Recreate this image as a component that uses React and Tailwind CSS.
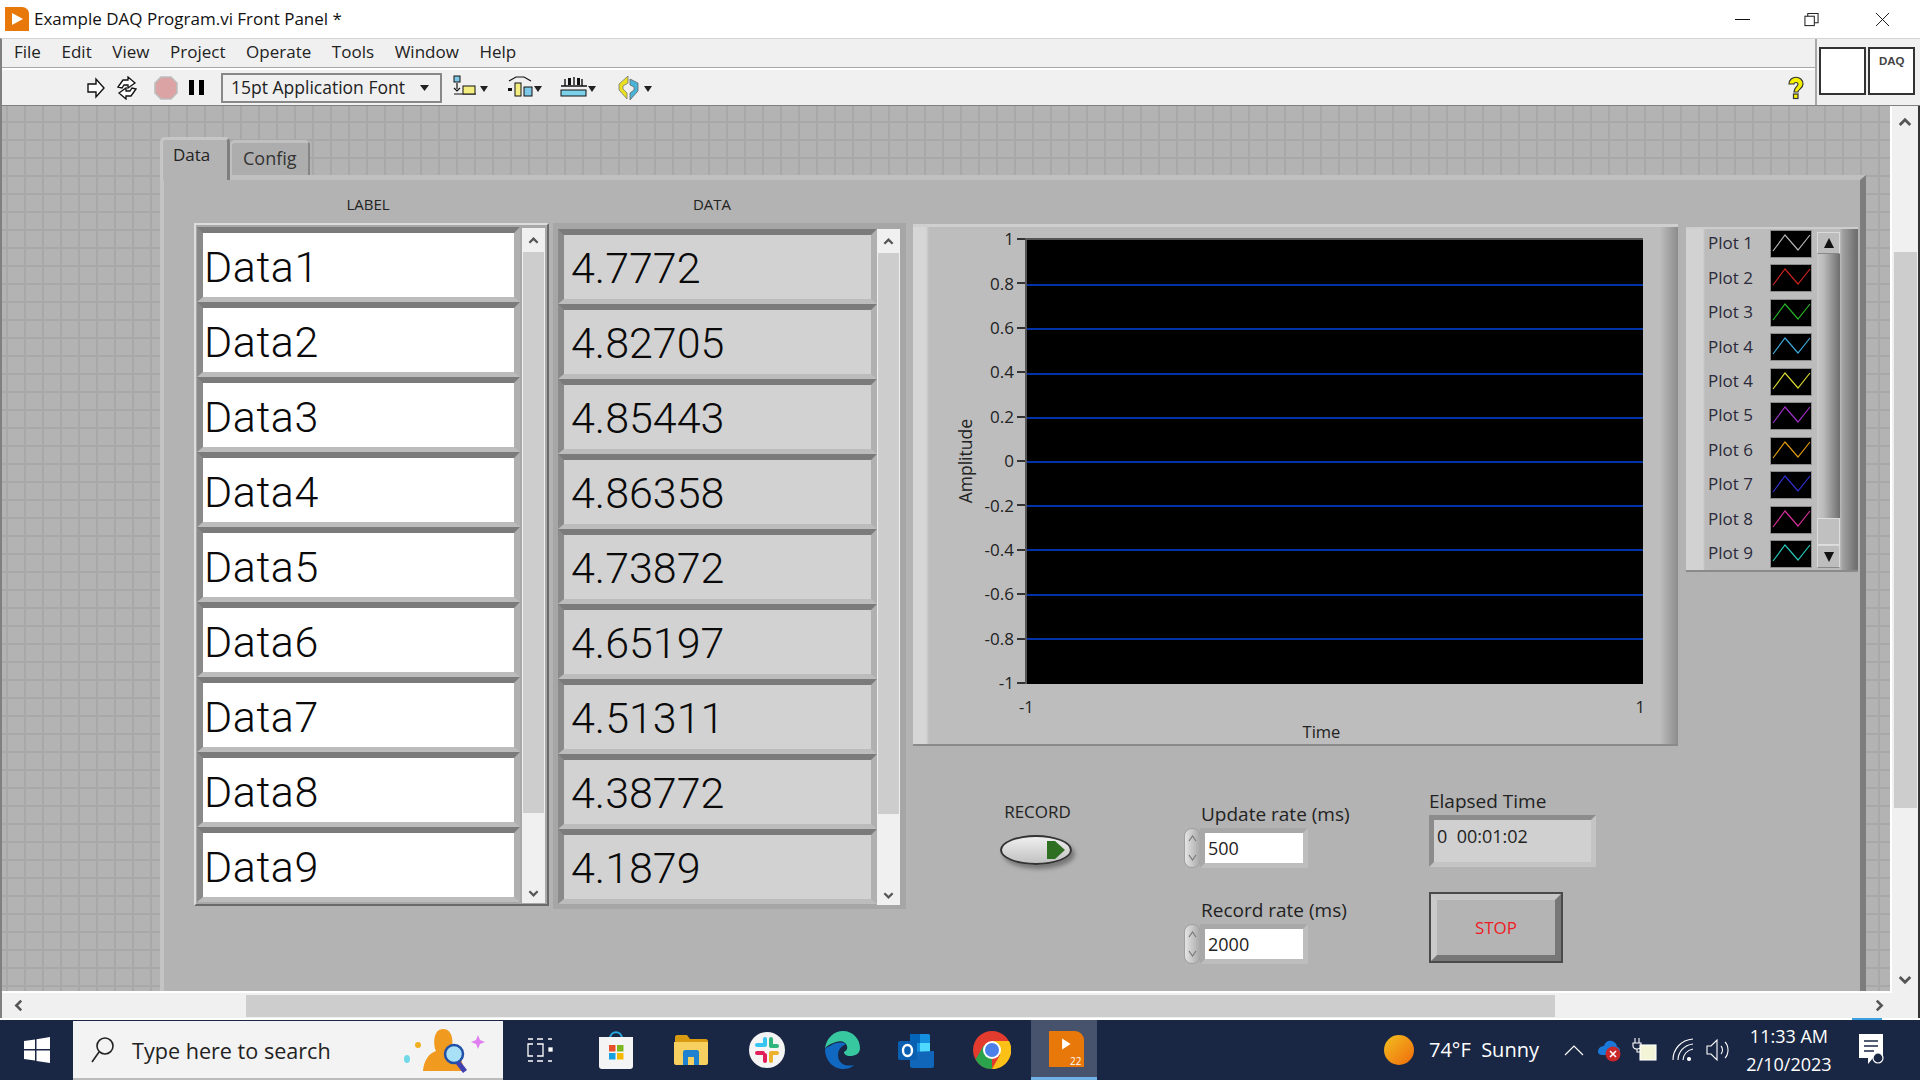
import React from "react";

const labels = ["Data1","Data2","Data3","Data4","Data5","Data6","Data7","Data8","Data9"];
const values = ["4.7772","4.82705","4.85443","4.86358","4.73872","4.65197","4.51311","4.38772","4.1879"];
const plots = [
  ["Plot 1","#b4b4b4"],["Plot 2","#c8241e"],["Plot 3","#28b428"],["Plot 4","#3fa9d8"],["Plot 4","#d8d832"],
  ["Plot 5","#a030c8"],["Plot 6","#e09a10"],["Plot 7","#3030d0"],["Plot 8","#d8309a"],["Plot 9","#28c8b8"],
];
const yTicks = ["1","0.8","0.6","0.4","0.2","0","-0.2","-0.4","-0.6","-0.8","-1"];

function Chevron({ dir = "up", size = 12, color = "#555" }) {
  const rot = { up: 0, down: 180, left: 270, right: 90 }[dir];
  return (
    <svg width={size} height={size} viewBox="0 0 12 12" style={{ transform: `rotate(${rot}deg)` }}>
      <path d="M1.5 8.5 6 4l4.5 4.5" fill="none" stroke={color} strokeWidth="2.4" />
    </svg>
  );
}

function Caret() {
  return (
    <svg width="9" height="6" viewBox="0 0 9 6" className="shrink-0"><path d="M0 0h9L4.500 6z" fill="#222" /></svg>
  );
}

function ListScroll({ thumbEnd }) {
  return (
    <div className="w-[23px] flex flex-col bg-[#f0f0f0]">
      <div className="h-[24px] flex items-center justify-center"><Chevron dir="up" size={11} /></div>
      <div className={`${thumbEnd} bg-[#cdcdcd] mx-[1px]`} />
      <div className="flex-1 flex items-end justify-center pb-[4px]"><Chevron dir="down" size={11} /></div>
    </div>
  );
}

function BigCell({ text, bg, inner }) {
  return (
    <div className="h-[75px] border-t-[6px] border-b-[5px] border-l-[6px] border-r-[6px] border-t-[#7b7b7b] border-b-[#bcbcbc] border-l-[#8a8a8a] border-r-[#b0b0b0]">
      <div className={`h-[64px] ${bg} ${inner} flex items-center text-[43px] leading-none text-[#0a0a0a] font-['Roboto',sans-serif] font-light`}>
        {text}
      </div>
    </div>
  );
}

function LabelCluster() {
  return (
    <div className="h-[683px] border-2 border-t-[#dcdcdc] border-l-[#dcdcdc] border-r-[#6a6a6a] border-b-[#6a6a6a] flex pt-[2px] pl-[1px] pr-[2px] bg-[#a8a8a8]">
      <div className="w-[324px]">
        {labels.map((l) => <BigCell key={l} text={l} bg="bg-white" inner="pl-[1px] pt-[4px] tracking-[0.6px]" />)}
      </div>
      <div className="ml-[2px] h-[675px] mt-[1px] flex"><ListScroll thumbEnd="h-[561px]" /></div>
    </div>
  );
}

function DataCluster() {
  return (
    <div className="h-[686px] flex pt-[6px] pl-[5px] pr-[5px] bg-[#a6a6a6]">
      <div className="w-[319px]">
        {values.map((l) => <BigCell key={l} text={l} bg="bg-[#d2d2d2]" inner="pl-[7px] pt-[2px]" />)}
      </div>
      <div className="h-[676px] flex"><ListScroll thumbEnd="h-[561px]" /></div>
    </div>
  );
}

function Chart() {
  return (
    <div className="w-[765px] h-[522px] ml-[2px] pt-[11px] bg-[linear-gradient(90deg,#d6d6d6_0,#d6d6d6_13px,#bdbdbd_16px,#bdbdbd_747px,#8c8c8c_765px)] border-b-2 border-b-[#8a8a8a] border-t-[3px] border-t-[#cfcfcf] text-[#222]">
      <div className="flex">
        <div className="ml-[43px] w-[20px] h-[446px] flex items-center justify-center">
          <span className="[writing-mode:vertical-rl] rotate-180 text-[17.5px] leading-none">Amplitude</span>
        </div>
        <div className="w-[49px] h-[446px] flex flex-col justify-between py-[1px] shrink-0">
          {yTicks.map((t) => (
            <div key={t} className="h-0 flex items-center justify-end gap-[3px] text-[17px]">
              <span>{t}</span>
              <div className="w-[8px] h-[2px] bg-[#333]" />
            </div>
          ))}
        </div>
        <div className="w-[618px] h-[446px] bg-black border-l-2 border-t-2 border-[#555] flex flex-col justify-between">
          {yTicks.map((t, i) => (
            <div key={t} className={`h-[2px] ${i === 0 || i === 10 ? "bg-transparent" : "bg-[#0033a8]"}`} />
          ))}
        </div>
      </div>
      <div className="flex justify-between ml-[106px] w-[626px] pt-[13px] text-[16.5px] leading-[20px]">
        <span>-1</span><span>1</span>
      </div>
      <div className="text-center ml-[48px] w-[721px] text-[16.5px] leading-[20px] mt-[5px]">Time</div>
    </div>
  );
}

function Swatch({ color }) {
  return (
    <svg width="42" height="28" viewBox="0 0 42 28" className="shrink-0">
      <rect width="42" height="28" fill="#000" stroke="#8c8c8c" strokeWidth="2" />
      <polyline points="3,21 15,5 28,20 40,5" fill="none" stroke={color} strokeWidth="1.2" />
    </svg>
  );
}

function Legend() {
  return (
    <div className="w-[172px] h-[345px] mt-[3px] ml-[8px] flex bg-[linear-gradient(90deg,#d2d2d2_0,#d2d2d2_17px,#bcbcbc_19px,#bcbcbc_154px,#a4a4a4_156px,#707070_170px)] border-b-2 border-b-[#8a8a8a] border-t-2 border-t-[#cdcdcd] pt-[1px]">
      <div className="ml-[22px] w-[104px] flex flex-col justify-between pb-[2px]">
        {plots.map(([n, c], i) => (
          <div key={i} className="h-[28px] flex items-center justify-between text-[17px] text-[#2a2a3a]">
            <span className="pb-[2px]">{n}</span>
            <Swatch color={c} />
          </div>
        ))}
      </div>
      <div className="ml-[5px] w-[23px] flex flex-col pt-[2px] pb-[2px]">
        <div className="h-[22px] bg-[#bdbdbd] border border-[#dadada] border-b-[#888] flex items-center justify-center">
          <svg width="12" height="10" viewBox="0 0 12 10"><path d="M6 0l5 10H1z" fill="#111" /></svg>
        </div>
        <div className="flex-1 bg-[linear-gradient(90deg,#c9c9c9,#bababa_30%,#6e6e6e)]" />
        <div className="h-[27px] bg-[#c0c0c0] border border-[#dddddd]" />
        <div className="h-[23px] bg-[#bdbdbd] border border-[#dadada] border-b-[#888] flex items-center justify-center">
          <svg width="12" height="10" viewBox="0 0 12 10"><path d="M6 10L1 0h10z" fill="#111" /></svg>
        </div>
      </div>
    </div>
  );
}

function Spinner() {
  return (
    <div className="w-[17px] h-[40px] rounded-[8px] bg-[linear-gradient(90deg,#e4e4e4,#a8a8a8)] border border-[#a0a0a0] flex flex-col items-center justify-around shrink-0 -mr-[1px]">
      <svg width="9" height="7" viewBox="0 0 9 7"><path d="M1 6 4.500 1 8 6" fill="none" stroke="#777" strokeWidth="1.2" /></svg>
      <svg width="9" height="7" viewBox="0 0 9 7"><path d="M1 1 4.500 6 8 1" fill="none" stroke="#777" strokeWidth="1.2" /></svg>
    </div>
  );
}

function NumBox({ label, value, className }) {
  return (
    <div className={className}>
      <div className="ml-[17px] mb-[2px] text-[19px] leading-[24px] text-[#222] whitespace-nowrap">{label}</div>
      <div className="flex">
        <Spinner />
        <div className="w-[108px] h-[40px] border-[5px] border-[#bdbdbd] border-t-[#a8a8a8] border-l-[#a8a8a8]">
          <div className="h-full bg-white pl-[3px] text-[18px] leading-[30px] text-[#222]">{value}</div>
        </div>
      </div>
    </div>
  );
}

function Controls() {
  return (
    <div className="flex">
      <div className="ml-[89px] mt-[56px] w-[72px] flex flex-col items-center">
        <div className="pl-[3px] text-[17px] leading-[20px] text-[#222] whitespace-nowrap">RECORD</div>
        <div className="mt-[13px] w-[72px] h-[30px] rounded-[50%] border-2 border-[#333] bg-[linear-gradient(180deg,#efefef,#c2c2c2)] shadow-[3px_4px_4px_#777] flex items-center justify-end pr-[3px]">
          <svg width="26" height="20" viewBox="0 0 26 20"><path d="M6 1h8l10 9-10 9H6z" fill="#2f6f22" /></svg>
        </div>
      </div>
      <div className="ml-[112px] w-[124px] flex flex-col">
        <NumBox className="mt-[56px]" label="Update rate (ms)" value="500" />
        <NumBox className="mt-[30px]" label="Record rate (ms)" value="2000" />
      </div>
      <div className="ml-[121px] flex flex-col mt-[43px]">
        <div className="text-[19px] leading-[24px] text-[#222] whitespace-nowrap">Elapsed Time</div>
        <div className="mt-[2px] w-[167px] h-[52px] border-[5px] border-t-[#8c8c8c] border-l-[#8c8c8c] border-r-[#c4c4c4] border-b-[#c4c4c4]">
          <div className="h-full bg-[#d0d0d0] pl-[3px] pt-[2px] text-[18px] leading-[28px] text-[#222] whitespace-pre">0  00:01:02</div>
        </div>
        <div className="mt-[25px] w-[134px] h-[71px] border-2 border-[#4a4a4a]">
          <div className="h-full border-[6px] border-t-[#c6c6c6] border-l-[#cacaca] border-r-[#777] border-b-[#777] bg-[#b4b4b4] flex items-center justify-center pt-[1px] text-[17px] text-[#ee1c25]">
            STOP
          </div>
        </div>
      </div>
    </div>
  );
}

function TabPanel() {
  return (
    <div className="ml-[158px] mt-[31px]">
      <div className="flex items-end h-[38px] relative z-10">
        <div className="w-[70px] h-[43px] -mb-[5px] rounded-t-[5px] bg-[#b3b3b3] border-t-[3px] border-l-[3px] border-r-[3px] border-t-[#c6c6c6] border-l-[#c6c6c6] border-r-[#7f7f7f] pl-[10px] pt-[3px] text-[17px] leading-[24px] text-[#222]">Data</div>
        <div className="w-[80px] h-[35px] rounded-t-[5px] bg-[#adadad] border-t-[3px] border-l-[2px] border-r-[2px] border-t-[#c0c0c0] border-l-[#c0c0c0] border-r-[#858585] pl-[11px] pt-[3px] text-[18px] leading-[24px] text-[#333]">Config</div>
      </div>
      <div className="w-[1706px] h-[817px] bg-[#b3b3b3] border-t-[5px] border-t-[#c0c0c0] border-l-[4px] border-l-[#c4c4c4] border-r-[6px] border-r-[#7d7d7d] flex pl-[30px]">
        <div className="w-[355px]">
          <div className="h-[43px] pt-[12px] text-center text-[15px] leading-[24px] text-[#222] pr-[7px]">LABEL</div>
          <LabelCluster />
        </div>
        <div className="w-[353px] ml-[4px]">
          <div className="h-[43px] pt-[12px] text-center text-[15px] leading-[24px] text-[#222] pr-[35px]">DATA</div>
          <DataCluster />
        </div>
        <div className="w-[767px] ml-[5px] pt-[44px] flex flex-col">
          <Chart />
          <Controls />
        </div>
        <div className="pt-[44px]"><Legend /></div>
      </div>
    </div>
  );
}

function ToolIcons() {
  return (
    <div className="flex items-center h-full">
      <svg className="ml-[84px]" width="20" height="22" viewBox="0 0 20 22"><path d="M2 7h8V2l8 9-8 9v-5H2z" fill="#fff" stroke="#111" strokeWidth="1.4" /></svg>
      <svg className="ml-[8px]" width="26" height="24" viewBox="0 0 26 24" fill="#fff" stroke="#111" strokeWidth="1.3">
        <path d="M4 11 9 4h5V1l7 6-7 5V9H10l-2 3z" />
        <path d="M22 13l-5 7h-5v3l-7-6 7-5v3h4l2-3z" />
      </svg>
      <svg className="ml-[14px]" width="24" height="24" viewBox="0 0 24 24"><path d="M7 1h10l6 6v10l-6 6H7l-6-6V7z" fill="#dba3a3" stroke="#bdbdbd" strokeWidth="1.6" /></svg>
      <div className="ml-[11px] flex gap-[5px]"><div className="w-[5px] h-[15px] bg-black" /><div className="w-[5px] h-[15px] bg-black" /></div>
      <div className="ml-[17px] w-[221px] h-[30px] border-2 border-[#888] flex items-center justify-between pl-[8px] pr-[11px] text-[17.5px] text-[#222]">
        <span className="whitespace-nowrap">15pt Application Font</span><Caret />
      </div>
      <svg className="ml-[11px]" width="36" height="28" viewBox="0 0 36 28">
        <rect x="1" y="2" width="6" height="6" fill="#7cc8e8" stroke="#111" />
        <path d="M4 9v6M1 14l3 3 3-3M1 20h22" stroke="#111" strokeWidth="1.2" fill="none" />
        <rect x="10" y="12" width="12" height="8" fill="#f4ee80" stroke="#111" />
        <path d="M27 12h8l-4 6z" fill="#222" />
      </svg>
      <svg className="ml-[17px]" width="37" height="28" viewBox="0 0 37 28">
        <path d="M3 7 10 3h8l7 4" fill="none" stroke="#111" strokeWidth="1.2" />
        <rect x="9" y="9" width="6" height="13" fill="#f4ee80" stroke="#111" />
        <rect x="18" y="13" width="8" height="9" fill="#7cc8e8" stroke="#111" />
        <rect x="2" y="14" width="4" height="3" fill="#111" />
        <path d="M28 12h8l-4 6z" fill="#222" />
      </svg>
      <svg className="ml-[17px]" width="37" height="28" viewBox="0 0 37 28">
        <path d="M1 12h26M14 3v8M5 5v7M22 5v7" stroke="#111" strokeWidth="1.4" />
        <rect x="8" y="4" width="3" height="7" fill="#111" />
        <rect x="17" y="4" width="3" height="7" fill="#111" />
        <rect x="1" y="16" width="25" height="6" fill="#7cd0e8" stroke="#111" />
        <path d="M28 12h8l-4 6z" fill="#222" />
      </svg>
      <svg className="ml-[19px]" width="37" height="28" viewBox="0 0 37 28">
        <path d="M12 2 3 10v6l8 9v-6l-4-4v-3l5-3z" fill="#e8e020" stroke="#777" strokeWidth="0.8" />
        <path d="M14 5l8 4v8l-8 9v-7l4-3v-3l-4-2z" fill="#48b4d8" stroke="#666" strokeWidth="0.8" />
        <path d="M28 12h8l-4 6z" fill="#222" />
      </svg>
    </div>
  );
}

function TitleBar() {
  return (
    <div className="h-[38px] shrink-0 bg-white flex items-center">
      <svg className="ml-[5px]" width="24" height="24" viewBox="0 0 24 24">
        <path d="M0 0h17c4 0 7 3 7 7v17H0z" fill="#e8780a" />
        <path d="M7 6l11 6-11 6z" fill="#fff" />
      </svg>
      <span className="ml-[5px] text-[17px] text-[#111] whitespace-nowrap">Example DAQ Program.vi Front Panel *</span>
      <div className="ml-auto flex items-center h-full">
        <div className="w-[15px] h-[1px] bg-[#111] mr-[54px]" />
        <svg width="15" height="15" viewBox="0 0 16 15" className="mr-[56px]" fill="none" stroke="#222" strokeWidth="1.1">
          <rect x="1" y="4" width="10" height="10" fill="#fff" />
          <path d="M4 4V1h11v10h-4" />
        </svg>
        <svg width="15" height="15" viewBox="0 0 16 16" className="mr-[30px]" stroke="#111" strokeWidth="1"><path d="M1 1l14 14M15 1 1 15" /></svg>
      </div>
    </div>
  );
}

function MenuArea() {
  const items = ["File","Edit","View","Project","Operate","Tools","Window","Help"];
  return (
    <div className="h-[68px] shrink-0 flex border-l-2 border-l-[#808080] border-b border-b-[#808080] border-t border-t-[#d4d4d4]">
      <div className="flex-1 flex flex-col">
        <div className="h-[29px] bg-[#f0f0f0] border-b border-b-[#a8a8a8] flex items-center text-[17px] text-[#222] pb-[2px]">
          <div className="flex gap-[20.6px] pl-[12px]">
            {items.map((t) => <span key={t}>{t}</span>)}
          </div>
        </div>
        <div className="flex-1 bg-[#f0f0f0] border-t-2 border-t-white flex items-center">
          <ToolIcons />
          <svg className="ml-auto mr-[10px]" width="18" height="24" viewBox="0 0 18 24">
            <path d="M2 8c0-9 14-9 14 0 0 5-5 5-5 8H7c0-5 4-5 4-8 0-2-4-2-4 0z" fill="#f4f000" stroke="#333" strokeWidth="1.2" />
            <rect x="6.500" y="18" width="4.500" height="4.500" fill="#f4f000" stroke="#333" strokeWidth="1.2" />
          </svg>
        </div>
      </div>
      <div className="w-[105px] bg-[#f0f0f0] border-l-2 border-l-[#a8a8a8] flex gap-[2px] pl-[2px] pt-[8px]">
        <div className="w-[47px] h-[48px] bg-white border-2 border-[#333]" />
        <div className="w-[47px] h-[48px] bg-white border-2 border-[#333] text-[11.5px] leading-none font-bold text-[#444] pl-[9px] pt-[7px] font-['Liberation_Sans',sans-serif]">DAQ</div>
      </div>
    </div>
  );
}

function Canvas() {
  return (
    <div className="h-[887px] overflow-hidden border-b-2 border-b-white border-r-2 border-r-white bg-[#b3b3b3] bg-[linear-gradient(#a8a8a8_2px,transparent_2px),linear-gradient(90deg,#a8a8a8_2px,transparent_2px)] bg-[size:18px_18px] bg-[position:4px_15px]">
      <TabPanel />
    </div>
  );
}

function Main() {
  return (
    <div className="h-[912px] shrink-0 flex border-l-2 border-l-[#808080] border-r-2 border-r-[#333] bg-[#f0f0f0]">
      <div className="flex-1 flex flex-col">
        <Canvas />
        <div className="flex-1 flex items-center pl-[10px]">
          <Chevron dir="left" size={13} />
          <div className="ml-[221px] w-[1309px] h-[22px] bg-[#cdcdcd]" />
          <div className="ml-auto mr-[6px]"><Chevron dir="right" size={13} /></div>
        </div>
      </div>
      <div className="w-[26px] flex flex-col items-center">
        <div className="h-[146px] w-full pt-[9px] flex justify-center"><Chevron dir="up" size={14} /></div>
        <div className="h-[556px] w-[23px] bg-[#cdcdcd]" />
        <div className="flex-1 flex items-end pb-[31px]"><Chevron dir="down" size={14} /></div>
      </div>
    </div>
  );
}

function Taskbar() {
  return (
    <div className="h-[60px] shrink-0 bg-[#1a2744] flex items-stretch text-white">
      <div className="w-[73px] flex items-center justify-center">
        <svg width="26" height="26" viewBox="0 0 26 26" fill="#fff"><path d="M0 4l11-1.500V12H0zM12.500 2.300 26 0v12H12.500zM0 13.500h11v10L0 22zM12.500 13.500H26V26l-13.500-2z" /></svg>
      </div>
      <div className="w-[430px] bg-[#f3f3f3] mt-[1px] border-b-2 border-b-[#bbb] flex items-center text-[#222]">
        <svg className="ml-[17px]" width="26" height="28" viewBox="0 0 26 28" fill="none" stroke="#222" strokeWidth="1.6">
          <circle cx="15" cy="10" r="8" />
          <path d="M9 16 2 26" />
        </svg>
        <span className="ml-[16px] pt-[3px] text-[21.6px] whitespace-nowrap">Type here to search</span>
        <svg className="ml-[auto] mr-[16px]" width="84" height="46" viewBox="0 0 84 46">
          <circle cx="15" cy="18" r="3" fill="#f0b020" />
          <ellipse cx="4" cy="32" rx="3" ry="4" fill="#70d8e8" />
          <path d="M75 8l2 5 5 2-5 2-2 5-2-5-5-2 5-2z" fill="#e080f0" />
          <path d="M20 44c1-12 7-18 13-20-3-6-3-22 7-22s11 14 8 22c8 2 12 10 13 20z" fill="#f09a20" />
          <circle cx="51" cy="27" r="9" fill="#a8e0f8" stroke="#2050a8" strokeWidth="2.5" />
          <path d="M57 34l7 9-4 3-7-9z" fill="#4040b0" />
        </svg>
      </div>
      <div className="w-[528px] flex items-center">
        <svg className="ml-[24px]" width="26" height="28" viewBox="0 0 26 28" fill="none" stroke="#fff" strokeWidth="1.3">
          <path d="M1 3h5M1 25h5M10 3h6M10 25h6M6 8H1v12h5M10 8h6v12h-6" />
          <path d="M21 3h4M21 25h4" />
          <rect x="22" y="12" width="3" height="3" fill="#fff" />
        </svg>
        <svg className="ml-[46px]" width="34" height="38" viewBox="0 0 34 38">
          <path d="M11 8c0-9 12-9 12 0" fill="none" stroke="#29a8e0" strokeWidth="2" />
          <path d="M0 6h34v29c0 2-1 3-3 3H3c-2 0-3-1-3-3z" fill="#f4f4f4" />
          <rect x="10" y="14" width="6.500" height="6.500" fill="#e8502a" />
          <rect x="18" y="14" width="6.500" height="6.500" fill="#7cb820" />
          <rect x="10" y="22" width="6.500" height="6.500" fill="#18a0e0" />
          <rect x="18" y="22" width="6.500" height="6.500" fill="#f8b800" />
        </svg>
        <svg className="ml-[41px]" width="34" height="30" viewBox="0 0 34 30">
          <path d="M1 2c0-1 1-2 2-2h10l3 4h16c1 0 2 1 2 2v4H1z" fill="#d89a10" />
          <path d="M0 7h34v21c0 1-1 2-2 2H2c-1 0-2-1-2-2z" fill="#f8d060" />
          <path d="M9 30V17c0-1 1-2 2-2h12c1 0 2 1 2 2v13h-5v-8h-6v8z" fill="#1e82d0" />
        </svg>
        <svg className="ml-[41px]" width="36" height="36" viewBox="0 0 36 36">
          <circle cx="18" cy="18" r="18" fill="#f4f4f4" />
          <rect x="14" y="5" width="4" height="10" rx="2" fill="#36c5f0" />
          <rect x="6" y="11" width="10" height="4" rx="2" fill="#36c5f0" />
          <rect x="20" y="5" width="4" height="10" rx="2" fill="#2eb67d" />
          <rect x="20" y="12" width="10" height="4" rx="2" fill="#2eb67d" />
          <rect x="20" y="21" width="4" height="10" rx="2" fill="#ecb22e" />
          <rect x="20" y="19" width="10" height="4" rx="2" fill="#ecb22e" />
          <rect x="14" y="21" width="4" height="10" rx="2" fill="#e01e5a" />
          <rect x="6" y="19" width="10" height="4" rx="2" fill="#e01e5a" />
        </svg>
        <svg className="ml-[39px]" width="36" height="38" viewBox="0 0 36 38">
          <path d="M1 18C2 7 10 0 19 0c10 0 17 8 17 17 0 6-5 8-10 8-4 0-6-2-6-4 2-1 4-3 3-6-1-4-6-6-11-4C6 13 2 15 1 18z" fill="#38c8a0" />
          <path d="M1 18c0 11 8 20 18 20 4 0 8-1 11-4-8 2-16-1-16-10 0-6 4-9 8-11-5-3-12-1-16 2-3 1-4 2-5 3z" fill="#1068c0" />
        </svg>
        <svg className="ml-[38px]" width="36" height="36" viewBox="0 0 36 36">
          <path d="M12 2h18c1 0 2 1 2 2v28H12z" fill="#28a8ea" />
          <path d="M12 2h10v9H12z" fill="#0364b8" />
          <path d="M22 2h8c1 0 2 1 2 2v7H22zM12 11h10v9H12z" fill="#1490df" />
          <path d="M22 11h10v9H22z" fill="#50d9ff" />
          <path d="M12 20l24-1v15c0 1-1 2-2 2H14c-1 0-2-1-2-2z" fill="#1066b8" />
          <rect x="0" y="9" width="19" height="19" rx="2" fill="#0a5fb0" />
          <ellipse cx="9.500" cy="18.500" rx="4.500" ry="5.500" fill="none" stroke="#fff" strokeWidth="2.400" />
        </svg>
        <svg className="ml-[39px]" width="38" height="38" viewBox="0 0 38 38">
          <circle cx="19" cy="19" r="19" fill="#e33b2e" />
          <path d="M19 38A19 19 0 0 1 2.500 28.500L11 14l8 5z" fill="#2ba24c" />
          <path d="M19 10h17a19 19 0 0 1-17 28l8-14z" fill="#fbc116" />
          <circle cx="19" cy="19" r="9" fill="#fff" />
          <circle cx="19" cy="19" r="7" fill="#4a80e8" />
        </svg>
      </div>
      <div className="w-[66px] bg-[#47536c] border-b-[3px] border-b-[#6fb1e4] flex items-center justify-center pl-[4px]">
        <div className="w-[35px] h-[36px] bg-[#e8780a] rounded-tr-[9px] flex flex-col items-center justify-between">
          <svg width="16" height="20" viewBox="0 0 20 26" className="mt-[3px]"><path d="M5 6l11 7-11 7z" fill="#fff" /></svg>
          <span className="text-[10px] leading-[12px] self-end pr-[2px]">22</span>
        </div>
      </div>
      <div className="flex-1 flex items-center">
        <div className="ml-[287px] w-[30px] h-[30px] rounded-full bg-[linear-gradient(135deg,#f2c020,#f06a0c)]" />
        <span className="ml-[15px] text-[20px] whitespace-pre">74°F  Sunny</span>
        <svg className="ml-[25px]" width="20" height="12" viewBox="0 0 20 12" fill="none" stroke="#fff" strokeWidth="1.2"><path d="M1 11 10 2l9 9" /></svg>
        <svg className="ml-[12px]" width="26" height="24" viewBox="0 0 26 24">
          <path d="M2 14c0-4 3-6 6-6 1-4 4-6 8-5 3 1 5 3 5 6 2 0 3 2 3 4 0 3-3 4-5 4H6c-2 0-4-1-4-3z" fill="#1a78d8" />
          <circle cx="17" cy="16" r="7.500" fill="#c8282a" />
          <path d="M14 13l6 6M20 13l-6 6" stroke="#fff" strokeWidth="1.600" />
        </svg>
        <svg className="ml-[10px]" width="26" height="26" viewBox="0 0 26 26" fill="none" stroke="#fff" strokeWidth="1.1">
          <path d="M3 1v5M7 1v5M1 6h8v3c0 2-2 3-4 3-2 0-4-1-4-3zM5 12v3h4" />
          <rect x="8" y="8" width="16" height="15" fill="#f4f4d8" />
        </svg>
        <svg className="ml-[14px]" width="22" height="24" viewBox="0 0 22 24" fill="none" stroke="#fff" strokeWidth="1.1">
          <path d="M1 22C1 11 9 2 21 1M6 22c0-8 6-15 15-16M11 22c0-5 4-10 10-11" />
          <circle cx="17" cy="21" r="1.500" fill="#fff" />
        </svg>
        <svg className="ml-[11px]" width="26" height="26" viewBox="0 0 26 26" fill="none" stroke="#fff" strokeWidth="1.1">
          <path d="M2 9h4l6-6v20l-6-6H2z" />
          <path d="M16 9c2 2 2 6 0 8M20 5c4 4 4 12 0 16" />
        </svg>
        <div className="ml-[3px] w-[110px] flex flex-col items-center text-[18px] leading-[28px]">
          <span>11:33 AM</span>
          <span>2/10/2023</span>
        </div>
        <svg className="ml-[15px]" width="28" height="32" viewBox="0 0 28 32">
          <path d="M0 0h24v24H14l-5 6v-6H0z" fill="#fff" />
          <path d="M5 7h14M5 12h14M5 17h10" stroke="#1a2744" strokeWidth="1.400" />
          <circle cx="19" cy="24" r="5" fill="#1a2744" stroke="#fff" strokeWidth="1.200" />
        </svg>
      </div>
    </div>
  );
}

export default function App() {
  return (
    <div className="w-[1920px] h-[1080px] flex flex-col overflow-hidden bg-white font-['Open_Sans',sans-serif]">
      <TitleBar />
      <MenuArea />
      <Main />
      <div className="h-[2px] shrink-0 bg-white flex justify-end pr-[38px]"><div className="w-[30px] bg-[#3ba0e0]" /></div>
      <Taskbar />
    </div>
  );
}
